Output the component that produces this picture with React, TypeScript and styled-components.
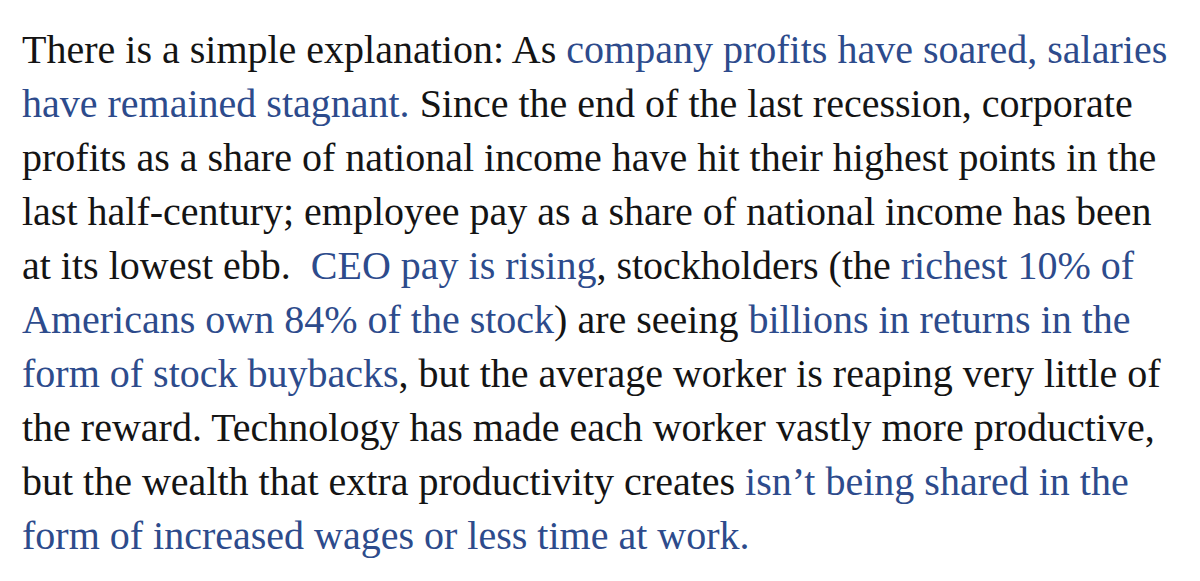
import React from "react";
import styled, { createGlobalStyle } from "styled-components";

const Global = createGlobalStyle`
  html, body { margin: 0; padding: 0; background: #ffffff; }
  body { width: 1200px; height: 581px; overflow: hidden; }
`;

const Paragraph = styled.div`
  padding: 22.8px 0 0 22px;
  font-family: "Liberation Serif", "Times New Roman", serif;
  font-size: 40px;
  line-height: 54.07px;
  color: #141414;
`;

const Line = styled.div`
  white-space: nowrap;
`;

const Link = styled.span`
  color: #2d4b8c;
`;

type Seg = string | { l: string };
const lines: Seg[][] = [
  ["There is a simple explanation: As ", { l: "company profits have soared, salaries" }],
  [{ l: "have remained stagnant." }, " Since the end of the last recession, corporate"],
  ["profits as a share of national income have hit their highest points in the"],
  ["last half-century; employee pay as a share of national income has been"],
  ["at its lowest ebb.\u00a0 ", { l: "CEO pay is rising" }, ", stockholders (the ", { l: "richest 10% of" }],
  [{ l: "Americans own 84% of the stock" }, ") are seeing ", { l: "billions in returns in the" }],
  [{ l: "form of stock buybacks" }, ", but the average worker is reaping very little of"],
  ["the reward. Technology has made each worker vastly more productive,"],
  ["but the wealth that extra productivity creates ", { l: "isn\u2019t being shared in the" }],
  [{ l: "form of increased wages or less time at work." }],
];

export default function App() {
  return (
    <>
      <Global />
      <Paragraph>
        {lines.map((segs, i) => (
          <Line key={i}>
            {segs.map((s, j) =>
              typeof s === "string" ? <React.Fragment key={j}>{s}</React.Fragment> : <Link key={j}>{s.l}</Link>
            )}
          </Line>
        ))}
      </Paragraph>
    </>
  );
}
